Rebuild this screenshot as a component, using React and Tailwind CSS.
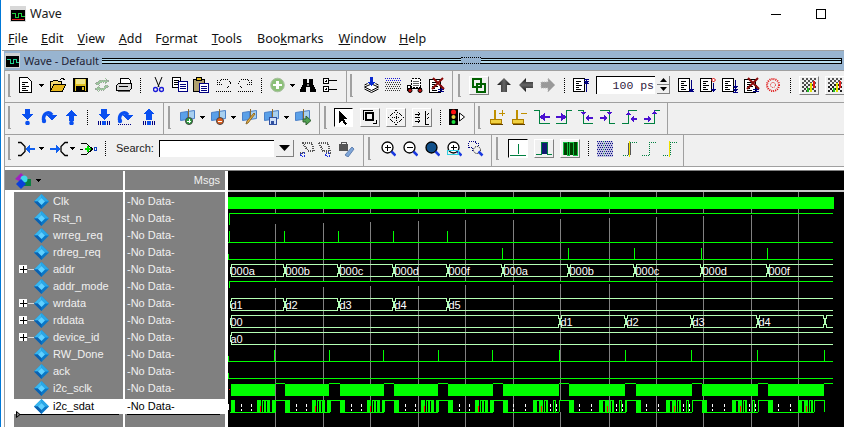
import React from "react";

const Ic = ({ w = 16, h = 16, c = "", children }) => (
  <svg width={w} height={h} viewBox={`0 0 ${w} ${h}`} className={`shrink-0 block ${c}`} fill="none" shapeRendering="crispEdges">
    {children}
  </svg>
);

const Grip = ({ c = "" }) => <div className={`shrink-0 w-[3px] h-[23px] border-l-2 border-b border-[#a0a0a0] ${c}`} />;
const Sep = ({ c = "" }) => <div className={`shrink-0 w-px h-[15px] border-l border-dotted border-black ${c}`} />;
const Arrow = ({ c = "" }) => (
  <Ic w={5} h={3} c={c}><path d="M0 0h5v1h-1v1h-1v1h-1v-1h-1v-1h-1z" fill="#000" /></Ic>
);
const Group = ({ c = "", children }) => (
  <div className={`flex items-center h-full shrink-0 border-r border-[#a0a0a0] ${c}`}>{children}</div>
);
const Btn = ({ c = "", children, pressed }) => (
  <div className={`shrink-0 h-[19px] flex items-center justify-center ${pressed ? "border-t border-l border-black border-r border-b border-r-white border-b-white bg-white" : "border-r border-b border-[#808080] border-t border-l border-t-white border-l-white"} ${c}`}>
    {children}
  </div>
);

const DocLines = ({ x = 0, y = 1 }) => (
  <g>
    <rect x={x + 0.5} y={y + 0.5} width="11" height="13" fill="#fff" stroke="#000" />
    <path d={`M${x + 3} ${y + 3.5}h5M${x + 3} ${y + 5.5}h3M${x + 3} ${y + 7.5}h6M${x + 3} ${y + 9.5}h3M${x + 3} ${y + 11.5}h5`} stroke="#000" />
  </g>
);
const NewDoc = ({ c }) => (
  <Ic w={13} c={c}>
    <path d="M.5.5h8l4 4v11h-12z" fill="#fff" stroke="#000" />
    <path d="M3 5.500h6M3 7.500h3M3 9.500h7M3 11.500h4M3 13.500h6" stroke="#000" />
  </Ic>
);
const Folder = ({ c }) => (
  <Ic c={c}>
    <path d="M10 3l2-2 3 2" stroke="#000" />
    <path d="M.5 14.500v-10h2l1-1h4l1 1h3v3" fill="#f3d870" stroke="#000" />
    <path d="M.5 14.500l3-7h12l-3 7z" fill="#e7b71c" stroke="#000" />
  </Ic>
);
const Save = ({ c }) => (
  <Ic w={15} c={c}>
    <rect x=".5" y="1.500" width="14" height="13" fill="#e0c020" stroke="#000" />
    <rect x="3" y="2" width="9" height="5" fill="#efe58a" />
    <rect x="3" y="9" width="9" height="5" fill="#000" />
    <rect x="9" y="10" width="2" height="3" fill="#e0c020" />
    <path d="M1 2h1v12h-1zM13 2h1v12h-1z" fill="#000" />
  </Ic>
);
const Reload = ({ c }) => (
  <Ic c={c}>
    <path d="M1 7l5-4h6l-1-2 4 3-4 3v-2h-4l-3 3z" fill="#9cc79c" stroke="#9aa69a" strokeDasharray="1 1" />
    <path d="M15 9l-5 4h-6l1 2-4-3 4-3v2h4l3-3z" fill="#9cc79c" stroke="#9aa69a" strokeDasharray="1 1" />
  </Ic>
);
const Print = ({ c }) => (
  <Ic c={c}>
    <path d="M4.500 6.500v-5h8l2 2v3" fill="#fff" stroke="#000" />
    <path d="M.5 8.500l2-2h13v5l-2 2h-13z" fill="#d8d8d8" stroke="#000" />
    <path d="M3 9.500h9" stroke="#000" />
    <path d="M2 14.500h12" stroke="#666" />
  </Ic>
);
const Cut = ({ c }) => (
  <Ic w={11} c={c}>
    <path d="M2 0l4 10M9 0l-4 10" stroke="#000" shapeRendering="auto" />
    <circle cx="2.500" cy="12.500" r="2" stroke="#1a1ad8" strokeWidth="1.400" shapeRendering="auto" />
    <circle cx="8.500" cy="12.500" r="2" stroke="#1a1ad8" strokeWidth="1.400" shapeRendering="auto" />
  </Ic>
);
const Copy = ({ c }) => (
  <Ic c={c}>
    <rect x=".5" y=".5" width="8" height="10" fill="#fff" stroke="#000" />
    <path d="M2 3.500h5M2 5.500h5M2 7.500h4" stroke="#000" />
    <rect x="6.500" y="4.500" width="9" height="10" fill="#fff" stroke="#000080" />
    <path d="M8 7.500h6M8 9.500h6M8 11.500h6" stroke="#000080" />
  </Ic>
);
const Paste = ({ c }) => (
  <Ic c={c}>
    <rect x=".5" y="2.500" width="11" height="12" fill="#b0a070" stroke="#000" />
    <rect x="3.500" y=".5" width="5" height="3" fill="#e8c020" stroke="#000" />
    <rect x="6.500" y="6.500" width="9" height="9" fill="#fff" stroke="#000080" />
    <path d="M8 9.500h6M8 11.500h6M8 13.500h6" stroke="#000080" />
  </Ic>
);
const Undo = ({ c, flip }) => (
  <Ic c={c}>
    <g transform={flip ? "translate(16 0) scale(-1 1)" : ""}>
      <path d="M3 6C5 1 11 1 14 5c1 3-1 5-3 6" stroke="#000" strokeDasharray="1 1" />
      <path d="M1 3l1 5 5-1" stroke="#000" strokeDasharray="1 1" />
      <path d="M0 14.500h15" stroke="#000" strokeDasharray="1 1" />
    </g>
  </Ic>
);
const Add = ({ c }) => (
  <Ic w={15} c={c}>
    <circle cx="7.500" cy="8" r="6.800" fill="#8cc078" stroke="#a8c0a0" shapeRendering="auto" />
    <path d="M6 4h3v3h3v2h-3v3h-3v-3h-3v-2h3z" fill="#fff" />
  </Ic>
);
const Bino = ({ c }) => (
  <Ic c={c}>
    <path d="M3 2h4v4h2v-4h4v5l3 6v2h-6v-5h-4v5h-6v-2l3-6z" fill="#000" />
    <path d="M7 7h2v2h-2z" fill="#888" />
  </Ic>
);
const Tree = ({ c }) => (
  <Ic w={15} c={c}>
    <rect x=".5" y="1.500" width="5" height="5" fill="#fff" stroke="#000" />
    <rect x=".5" y="9.500" width="5" height="5" fill="#fff" stroke="#000" />
    <path d="M2 4h2M3 3v2M2 12h2M3 11v2M6 3.500h8M6 12.500h8" stroke="#000" />
  </Ic>
);
const Layers = ({ c }) => (
  <Ic w={15} c={c}>
    <path d="M7.500 7l7 3-7 3.500-7-3.500z" fill="#fff" stroke="#000" shapeRendering="auto" />
    <path d="M.5 12l7 3.500 7-3.500" stroke="#000" shapeRendering="auto" />
    <path d="M.5 8l3-1.500M14.500 8l-3-1.500" stroke="#000" shapeRendering="auto" />
    <path d="M6 0h3v5h2l-3.500 4-3.500-4h2z" fill="#0a2ad0" />
  </Ic>
);
const Dots = ({ c }) => (
  <Ic c={c}>
    {[...Array(7)].map((_, r) =>
      [...Array(8)].map((_, k) => (
        <rect key={`${r}-${k}`} x={k * 2 + (r % 2)} y={1 + r * 2} width="1" height="1" fill={r < 2 ? "#1a1ad0" : "#333"} />
      ))
    )}
  </Ic>
);
const Cart = ({ c }) => (
  <Ic c={c}>
    <path d="M4.500 1.500h9v9h-9z" fill="#fff" stroke="#000" strokeDasharray="2 1" />
    <path d="M6 4h6M6 6h6M6 8h6" stroke="#666" />
    <path d="M.5 8.500h3v5h-3z" fill="#fff" stroke="#000" />
    <path d="M1 11h14" stroke="#000" />
    <circle cx="3" cy="13.500" r="2" fill="#c01010" stroke="#000" shapeRendering="auto" />
    <circle cx="13" cy="13.500" r="2" fill="#c01010" stroke="#000" shapeRendering="auto" />
  </Ic>
);
const XDoc = ({ c }) => (
  <Ic c={c}>
    <DocLines x={0} y={2} />
    <path d="M12 8v6M9 12.500h6M9 14.500h6" stroke="#000080" />
    <path d="M4 1l11 11M14 1l-11 11" stroke="#8a0a0a" strokeWidth="2" shapeRendering="auto" />
  </Ic>
);
const ArrowBlack = ({ dir, c, light }) => {
  const rot = { up: 0, left: -90, right: 90 }[dir];
  return (
    <Ic c={c}>
      <defs>
        <linearGradient id={`g${dir}`} x1="0" x2="1" y1="0" y2="0">
          <stop offset="0" stopColor="#111" />
          <stop offset=".5" stopColor="#666" />
          <stop offset="1" stopColor="#111" />
        </linearGradient>
      </defs>
      <g transform={`rotate(${rot} 8 8)`}>
        <path d="M8 1l7 7h-4v7h-6v-7h-4z" fill={light ? "#999" : `url(#g${dir})`} strokeDasharray="1 1" stroke={light ? "#bbb" : "none"} shapeRendering="auto" />
      </g>
    </Ic>
  );
};
const DocMark = ({ c, kind }) => (
  <Ic c={c}>
    <DocLines x={0} y={1} />
    {kind === "up" && <path d="M13.500 3v12M11 2h5M11 4.500h5M11.500 7l2-2 2 2" stroke="#000080" />}
    {kind === "down" && <path d="M13.500 3v11M11 14.500h5M11.500 12l2 2 2-2" stroke="#000080" />}
    {kind === "updown" && <><path d="M13.500 6v9M11.500 12l2 2 2-2" stroke="#000080" /><path d="M13.500 1l2 2-2 2-2-2z" fill="#fff" stroke="#e00000" shapeRendering="auto" /></>}
    {kind === "dd" && <path d="M13.500 3v11M11.500 9l2 2 2-2M11.500 12l2 2 2-2M11 15h5" stroke="#000080" />}
  </Ic>
);
const RedBall = ({ c }) => (
  <Ic w={14} c={c}>
    <circle cx="7" cy="8" r="6" stroke="#e01010" strokeDasharray="1 1" strokeWidth="2" shapeRendering="auto" />
    <circle cx="7" cy="8" r="2.500" stroke="#e01010" strokeDasharray="1 1" shapeRendering="auto" />
  </Ic>
);
const Link = () => (
  <Ic w={14} h={15}>
    <rect x="1" y="1" width="8" height="8" stroke="#006000" strokeWidth="2" />
    <rect x="5" y="6" width="8" height="8" stroke="#006000" strokeWidth="2" />
  </Ic>
);
const Check = ({ b = "#444" }) => (
  <Ic w={15} h={15}>
    {[...Array(7)].map((_, r) =>
      [...Array(7)].map((_, k) =>
        (r + k) % 2 === 0 ? <rect key={`${r}${k}`} x={k * 2} y={r * 2} width="1.500" height="1.500" fill={r < 3 ? "#555" : b} /> : null
      )
    )}
    <path d="M9 5v9" stroke="#e0e000" strokeWidth="2" />
    <path d="M12 3v7" stroke="#e02020" strokeWidth="2" />
    <path d="M6 10v4" stroke="#20c020" strokeWidth="2" />
  </Ic>
);

const Ball = ({ c, up }) => (
  <Ic w={11} c={c}>
    <g transform={up ? "translate(0 12) scale(1 -1)" : ""}>
      <path d="M3 0h5v5h3l-5.500 6-5.500-6h3z" fill="#0a50f0" />
    </g>
    <circle cx="5.500" cy="14" r="2.300" fill="#0a50f0" shapeRendering="auto" />
  </Ic>
);
const Curve = ({ c, w = 16, base }) => (
  <Ic w={w} c={c}>
    <path d="M2.500 11C2 4 8 2 11 6" stroke="#0a50f0" strokeWidth="3.500" shapeRendering="auto" />
    <path d="M6 6h10l-5 6z" fill="#0a50f0" />
    <circle cx="3" cy="12" r="2.200" fill="#0a50f0" shapeRendering="auto" />
    {base && <path d="M1 15.500h14" stroke="#000080" strokeDasharray="1 1" />}
  </Ic>
);
const BaseArrow = ({ c, up }) => (
  <Ic w={12} c={c}>
    <path d={up ? "M6 0l6 5h-3v6h-6v-6h-3z" : "M3 0h6v5h3l-6 6-6-6h3z"} fill="#0a50f0" />
    <path d="M.5 12v4M2.500 12v4M9.500 12v4M11.500 12v4" stroke="#000080" />
    <rect x="4" y="12" width="4" height="4" fill="#0a50f0" />
  </Ic>
);
const WinFile = ({ c, badge, dd }) => (
  <Ic w={dd || 16} c={c}>
    <path d="M.5 3.500l7-1 0 8-7 1z" fill="#5aa0e8" stroke="#4a80c8" shapeRendering="auto" />
    <path d="M7.500 2.500l7-1 0 8-7 1z" fill="#a8d0f0" stroke="#4a80c8" shapeRendering="auto" />
    <path d="M8 0v10" stroke="#8a6a30" />
    {badge}
  </Ic>
);
const Pointer = () => (
  <Ic w={11} h={15}>
    <path d="M1 1l9 8-4 0 3 5-2 1-3-5-3 3z" fill="#000" />
  </Ic>
);
const Boxes = () => (
  <Ic w={14} h={14}>
    <path d="M.5 9.500v-9h9" stroke="#000" />
    <rect x="3" y="3" width="7" height="7" stroke="#000" strokeWidth="2" />
    <path d="M10 13.500h3.500v-3.500" stroke="#000" />
  </Ic>
);
const Compass = () => (
  <Ic w={16} h={15}>
    <path d="M8 .5l4 4M8 .5l-4 4M8 14.500l4-4M8 14.500l-4-4M.5 7.500l4-4M.5 7.500l4 4M15.500 7.500l-4-4M15.500 7.500l-4 4" stroke="#000" strokeDasharray="1 1" />
    <path d="M4 7.500h8M8 3.500v8" stroke="#000" strokeDasharray="1 1" />
  </Ic>
);
const Stairs = () => (
  <Ic w={16} h={15}>
    <path d="M1 4h5M1 7.500h5M1 11h5M11 1v13h4" stroke="#000" />
    <path d="M4 2l2 2-2 2M4 9l2 2-2 2" stroke="#000" />
    <path d="M13 4h2M14 3v2M13 8h2M14 7v2" stroke="#000" strokeDasharray="1 1" />
  </Ic>
);
const Light = ({ c }) => (
  <Ic c={c}>
    <rect x="0" y="0" width="9" height="16" fill="#000" />
    <circle cx="4.500" cy="3" r="2.500" fill="#ff1010" shapeRendering="auto" />
    <circle cx="4.500" cy="8" r="2" fill="#e8d040" shapeRendering="auto" />
    <circle cx="4.500" cy="13" r="2" fill="#20e040" shapeRendering="auto" />
    <path d="M10.500 4v8l5-4z" fill="#fff" stroke="#000" shapeRendering="auto" />
  </Ic>
);
const Mark = ({ c, plus }) => (
  <Ic w={15} c={c}>
    <path d="M5 1v9" stroke="#c09000" strokeWidth="2" />
    <rect x=".5" y="10.500" width="11" height="4" fill="#f0d040" stroke="#b08000" />
    <path d="M1 15.500h12" stroke="#604000" />
    {plus ? <path d="M9 4h6M12 1v6" stroke="#c09000" /> : <path d="M9 4h6" stroke="#c09000" />}
  </Ic>
);
const Edge = ({ c, d, a, w = 16 }) => (
  <Ic w={w} c={c}>
    <path d={d} stroke="#008040" />
    <path d={a} fill="#4a10d0" />
  </Ic>
);
const Glass = ({ c, kind }) => (
  <Ic w={kind === "dash" ? 16 : 15} c={c}>
    {kind === "dash" ? (
      <path d="M.5 6.500v-6h7M.5 6.500h4v4M7.500 .5v2h3v3" stroke="#000080" strokeDasharray="1 1" />
    ) : (
      <circle cx="6.500" cy="6.500" r="5.500" fill={kind === "full" ? "#10508a" : "#fff"} stroke="#000" strokeWidth="1.300" shapeRendering="auto" />
    )}
    {kind === "dash" && <circle cx="9" cy="9" r="3.500" stroke="#000" strokeDasharray="1 1" shapeRendering="auto" />}
    {(kind === "plus" || kind === "area") && <path d="M3.500 6.500h6M6.500 3.500v6" stroke="#000" strokeWidth="1.400" />}
    {kind === "minus" && <path d="M3.500 6.500h6" stroke="#000" strokeWidth="1.400" />}
    <path d="M10.500 10.500l4 4" stroke="#1a3ae0" strokeWidth="2.500" shapeRendering="auto" />
    {kind === "area" && <rect x=".5" y="9.500" width="11" height="4" stroke="#30d0e0" />}
  </Ic>
);
const PlotA = () => (
  <Ic w={16} h={14}><path d="M8 2v10M0 13h16" stroke="#008040" /></Ic>
);
const PlotB = () => (
  <Ic w={16} h={15}><rect x="5" y="1" width="6" height="12" fill="#101870" /><path d="M0 13h5v-12h6v12h5" stroke="#008040" /></Ic>
);
const PlotC = () => (
  <Ic w={16} h={15}><rect x="1" y="1" width="14" height="13" fill="#004000" /><path d="M1 14v-13h4v13h2v-13h4v13h4v-13" stroke="#10c040" /></Ic>
);
const Dither = ({ c }) => (
  <Ic c={c}>
    {[...Array(8)].map((_, r) =>
      [...Array(8)].map((_, k) => (
        <rect key={`${r}${k}`} x={k * 2 + (r % 2 ? 1 : 0)} y={r * 2} width="1" height="1" fill={k === 3 ? "#20a040" : "#101080"} />
      ))
    )}
    <rect x="0" y="0" width="16" height="16" fill="#0000a0" opacity=".18" />
  </Ic>
);
const Step = ({ c, yellow, w = 15, fill }) => (
  <Ic w={w} c={c}>
    <path d="M0 14.500h7v-13h8" stroke="#008040" strokeDasharray="1 1" />
    {fill && <rect x="5" y="2" width="3" height="12" fill="#555" />}
    {yellow && <path d="M6.500 0v16" stroke="#f0e000" />}
  </Ic>
);

const Diamond = () => (
  <svg width="15" height="15" viewBox="0 0 15 15" className="shrink-0 block">
    <path d="M7.500 0L15 7.500 7.500 15 0 7.500z" fill="#0a78c8" />
    <path d="M7.500 0L15 7.500 11 7.500 7.500 4z" fill="#2aa8e8" />
    <path d="M7.500 0L0 7.500 4 7.500 7.500 4z" fill="#38b8f0" />
    <path d="M7.500 15L0 7.500 4 7.500 7.500 11z" fill="#0a60b0" />
    <path d="M7.500 4L11 7.500 7.500 11 4 7.500z" fill="#60d0ff" />
  </svg>
);

const signals = [
  ["Clk"], ["Rst_n"], ["wrreg_req"], ["rdreg_req"], ["addr", 1], ["addr_mode"],
  ["wrdata", 1], ["rddata", 1], ["device_id", 1], ["RW_Done"], ["ack"], ["i2c_sclk"],
];

const Name = ({ name, exp }) => (
  <div className="h-[17px] flex items-center">
    {exp ? (
      <>
        <div className="ml-[5px] w-[9px] h-[9px] bg-white border-r border-b border-[#808080] flex items-center justify-center shrink-0">
          <svg width="7" height="7" viewBox="0 0 7 7" shapeRendering="crispEdges" className="block"><path d="M0 3.500h7M3.500 0v7" stroke="#000" /></svg>
        </div>
        <div className="w-[6px] h-px bg-[#d8d8d8] shrink-0" />
      </>
    ) : (
      <div className="w-[20px] shrink-0" />
    )}
    <Diamond />
    <span className="ml-1 text-[11px] text-[#f0f0f0] leading-none">{name}</span>
  </div>
);

const T = [229, 284, 338, 393, 447, 502, 568, 634, 701, 767];
const grid = [275, 323, 370, 418, 465, 513, 560, 609, 656, 703, 751, 798];
const G = "#00ff00";
const BUS = "#b4ffb4";

const Bus = ({ y, times, labels, end = 833 }) => {
  const t = y + 0.5, b = y + 12.5, m = y + 6.5;
  let d = "";
  times.forEach((x, i) => {
    const nx = times[i + 1] ?? end;
    const last = i === times.length - 1;
    if (i === 0) d += `M${x + 1} ${m}L${x + 3} ${t}M${x + 1} ${m}L${x + 3} ${b}`;
    d += `M${x + 3} ${t}H${last ? nx : nx - 1}M${x + 3} ${b}H${last ? nx : nx - 1}`;
    if (!last) d += `M${nx - 1} ${t}L${nx + 1} ${m}L${nx - 1} ${b}M${nx + 3} ${t}L${nx + 1} ${m}L${nx + 3} ${b}`;
  });
  return (
    <g>
      <path d={d} stroke={BUS} fill="none" />
      {labels.map((l, i) => (
        <text key={i} x={times[i] + 1.5} y={y + 10.5} fill="#fff" fontSize="11" fontFamily="'Liberation Sans', sans-serif">{l}</text>
      ))}
    </g>
  );
};

const shortP = { solid: [[1, 5], [27, 31], [38, 40], [42, 45]], hi: [[32, 34], [35, 37]], white: [11, 21], red: [30] };
const longP = { solid: [[0, 5], [30, 33], [37, 40], [43, 45]], hi: [[33, 36], [41, 43], [50, 52], [56, 59]], white: [10, 22, 47, 53, 60, 62], red: [38, 61] };

const Sdat = () => {
  const starts = [[230, 55, shortP], [285, 55, shortP], [340, 54, shortP], [394, 54, shortP], [448, 55, shortP], [503, 66, longP], [569, 67, longP], [636, 66, longP], [702, 66, longP], [768, 56, longP]];
  return (
    <g>
      {starts.map(([s, len, p], i) => {
        const stop = len - 10;
        return (
          <g key={i}>
            <path d={`M${s} 412.500H${s + stop}`} stroke={G} />
            {p.solid.map(([a, b], k) => <rect key={k} x={s + a} y="400" width={b - a} height="12" fill={G} />)}
            {p.hi.filter(([a]) => a < stop).map(([a, b], k) => <path key={k} d={`M${s + a + 0.5} 412V400.500H${s + b + 0.5}V412`} stroke={G} />)}
            {p.white.filter((x) => x < stop).map((x, k) => <path key={k} d={`M${s + x + 0.5} 404v3M${s + x + 0.5} 409v2`} stroke="#fff" />)}
            {p.red.filter((x) => x < stop).map((x, k) => <path key={k} d={`M${s + x + 0.5} 406v6`} stroke="#ff0000" />)}
            <path d={`M${s + stop + 0.5} 412V400.500H${s + len + 0.5}V412`} stroke={G} />
          </g>
        );
      })}
      <path d="M228.500 404v6" stroke="#fff" />
    </g>
  );
};

const Wave = () => {
  const sclk = [[231, 275], [285, 329], [340, 384], [394, 438], [448, 493], [503, 559], [569, 625], [636, 692], [702, 758], [768, 824]];
  return (
    <svg width="616" height="235" viewBox="228 192 616 235" shapeRendering="crispEdges" className="block shrink-0">
      {grid.map((x) => <path key={x} d={`M${x + 0.5} 192V427`} stroke="#808080" />)}
      <rect x="228" y="197" width="606" height="12" fill={G} />
      <path d="M229.500 225V213.500H833" stroke={G} />
      <path d="M228 242.500H833" stroke={G} />
      {[229, 284, 338, 393, 447].map((x) => <path key={x} d={`M${x + 0.5} 242V231`} stroke={G} />)}
      <path d="M228 259.500H833M228.500 254V259" stroke={G} />
      {[502, 568, 634, 701, 767].map((x) => <path key={x} d={`M${x + 0.5} 259V248`} stroke={G} />)}
      <Bus y={264} times={T} labels={["000a", "000b", "000c", "000d", "000f", "000a", "000b", "000c", "000d", "000f"]} />
      <path d="M229.500 288V281.500H833" stroke={G} />
      <Bus y={298} times={[229, 284, 338, 393, 447]} labels={["d1", "d2", "d3", "d4", "d5"]} />
      <Bus y={315} times={[229, 559, 625, 691, 757, 824]} labels={["00", "d1", "d2", "d3", "d4", ""]} />
      <Bus y={332} times={[229]} labels={["a0"]} />
      <path d="M228 361.500H833M228.500 356V361" stroke={G} />
      {[274, 329, 383, 438, 492, 559, 625, 691, 757, 824].map((x) => <path key={x} d={`M${x + 0.5} 361V350`} stroke={G} />)}
      <path d="M228 378.500H833M228.500 373V378" stroke={G} />
      {sclk.map(([a, b], i) => {
        const nx = sclk[i + 1] ? sclk[i + 1][0] : 833;
        return (
          <g key={a}>
            <rect x={a} y="384" width={b - a} height="12" fill={G} />
            <path d={`M${b + 0.5} 384V383.500H${nx}`} stroke={G} />
          </g>
        );
      })}
      <path d="M229 389.500h1" stroke="#ff0000" />
      <Sdat />
    </svg>
  );
};

const Row = ({ c = "", children }) => <div className={`flex shrink-0 border-t border-[#a0a0a0] ${c}`}>{children}</div>;

export default function App() {
  return (
    <div className="w-[844px] h-[427px] overflow-hidden bg-white flex flex-col border-l border-[#0078d7] font-['Noto_Sans',sans-serif]">
      {/* title */}
      <div className="h-[28px] flex items-center shrink-0">
        <svg width="16" height="16" viewBox="0 0 16 16" shapeRendering="crispEdges" className="ml-[9px] block shrink-0">
          <rect width="16" height="16" fill="#d8d8d8" />
          <rect x="1" y="4" width="14" height="11" fill="#000" />
          <path d="M2 7h3v4h3v-4h3v3h4" stroke="#20d040" fill="none" />
          <path d="M2 13h12" stroke="#e02020" />
        </svg>
        <span className="ml-[4px] text-[12.5px] text-[#1a1a1a] leading-none">Wave</span>
        <div className="ml-auto mr-[35px] w-[10px] h-px bg-black" />
        <div className="mr-[18px] w-[10px] h-[10px] border border-black" />
      </div>
      {/* menu */}
      <div className="h-[22px] flex items-center shrink-0 text-[12.5px] text-[#111] leading-none pl-[7px]">
        <span><u>F</u>ile</span>
        <span className="ml-[13px]"><u>E</u>dit</span>
        <span className="ml-[14px]"><u>V</u>iew</span>
        <span className="ml-[14px]"><u>A</u>dd</span>
        <span className="ml-[13px]">F<u>o</u>rmat</span>
        <span className="ml-[14px]"><u>T</u>ools</span>
        <span className="ml-[15px]">Boo<u>k</u>marks</span>
        <span className="ml-[15px]"><u>W</u>indow</span>
        <span className="ml-[13px]"><u>H</u>elp</span>
      </div>
      {/* inner window */}
      <div className="ml-[1px] flex-1 min-h-0 flex flex-col border-t border-[#a0a0a0]">
        <div className="ml-[2px] h-[19px] bg-[#98b4d0] flex items-center shrink-0">
          <svg width="15" height="15" viewBox="0 0 15 15" shapeRendering="crispEdges" className="ml-[1px] block shrink-0">
            <rect width="15" height="15" fill="#d0d0d0" />
            <rect x="1" y="3" width="13" height="11" fill="#000" />
            <path d="M2 6h3v4h3v-4h3v3h3" stroke="#20d090" fill="none" />
          </svg>
          <span className="ml-[4px] text-[11px] text-[#223] leading-none w-[78px] shrink-0 whitespace-nowrap">Wave - Default</span>
          <div className="w-[359px] h-[6px] border-t border-b border-black bg-[#b8def0] flex flex-col justify-center shrink-0">
            <div className="h-px bg-black" />
          </div>
          <div className="w-[20px] h-[7px] bg-[#98b4d0] border-y border-dotted border-black shrink-0" />
          <div className="flex-1 h-[6px] mr-[2px] border-t border-b border-r border-black bg-[#b8def0] flex flex-col justify-center">
            <div className="h-px bg-black" />
          </div>
        </div>
        <div className="ml-[2px] flex-1 min-h-0 flex flex-col bg-[#f0f0f0] border-l border-[#a0a0a0]">
          {/* Row 1 */}
          <Row c="h-[32px] border-[#606060] [&>div]:pb-[3px]">
            <Group c="w-[342px] pl-[3px]">
              <Grip />
              <NewDoc c="ml-2" />
              <Arrow c="ml-[7px]" />
              <Folder c="ml-1.5" />
              <Save c="ml-[7px]" />
              <Reload c="ml-1.5" />
              <Print c="ml-1.5" />
              <Sep c="ml-2" />
              <Cut c="ml-3" />
              <Copy c="ml-2" />
              <Paste c="ml-[5px]" />
              <Undo c="ml-[7px]" />
              <Undo c="ml-[5px]" flip />
              <Sep c="ml-2" />
              <Add c="ml-2" />
              <Arrow c="ml-[5px]" />
              <Bino c="ml-[5px]" />
              <Tree c="ml-[7px]" />
            </Group>
            <Group c="w-[106px] pl-[3px]">
              <Grip />
              <Layers c="ml-[11px]" />
              <Dots c="ml-1.5" />
              <Cart c="ml-1.5" />
              <XDoc c="ml-1.5" />
            </Group>
            <div className="flex items-center h-full pl-[5px]">
              <Grip />
              <Btn c="ml-2 w-[20px]"><Link /></Btn>
              <ArrowBlack dir="up" c="ml-[7px]" />
              <ArrowBlack dir="left" c="ml-1.5" />
              <ArrowBlack dir="right" c="ml-1.5" light />
              <Sep c="ml-2" />
              <DocMark kind="up" c="ml-2" />
              <div className="ml-[7px] w-[59px] h-[18px] bg-white border-t border-l border-black shrink-0 flex items-center justify-end pr-[1px] text-[11.5px] text-[#302040] font-['Liberation_Mono',monospace] leading-none whitespace-pre">100 ps</div>
              <div className="ml-[2px] w-[13px] h-[18px] flex flex-col shrink-0 border-r border-b border-[#808080]">
                <div className="flex-1 flex items-center justify-center"><svg width="7" height="4" viewBox="0 0 7 4" className="block"><path d="M3.500 0L7 4H0z" fill="#000" /></svg></div>
                <div className="h-px bg-[#808080]" />
                <div className="flex-1 flex items-center justify-center"><svg width="7" height="4" viewBox="0 0 7 4" className="block"><path d="M0 0h7L3.500 4z" fill="#000" /></svg></div>
              </div>
              <DocMark kind="down" c="ml-2" />
              <DocMark kind="updown" c="ml-1.5" />
              <DocMark kind="dd" c="ml-1.5" />
              <XDoc c="ml-1.5" />
              <RedBall c="ml-1.5" />
              <Sep c="ml-2.5" />
              <Btn c="ml-2 w-[20px]"><Check /></Btn>
              <Btn c="ml-1.5 w-[20px]"><Check b="#222" /></Btn>
            </div>
          </Row>
          {/* Row 2 */}
          <Row c="h-[32px] [&>div]:pb-[3px]">
            <Group c="w-[159px] pl-[3px]">
              <Grip />
              <Ball c="ml-[11px]" />
              <Curve c="ml-2" />
              <Ball up c="ml-[9px]" />
              <Sep c="ml-2.5" />
              <BaseArrow c="ml-2.5" />
              <Curve w={17} base c="ml-[7px]" />
              <BaseArrow up c="ml-[9px]" />
            </Group>
            <Group c="w-[156px] pl-[4px]">
              <Grip />
              <WinFile c="ml-[9px]" dd={15} badge={<><circle cx="9" cy="12" r="3.500" fill="#30a040" stroke="#444" shapeRendering="auto" /><path d="M7 12h4M9 10v4" stroke="#fff" /></>} />
              <Arrow c="ml-[5px]" />
              <WinFile c="ml-1.5" dd={15} badge={<><circle cx="9" cy="12" r="3.500" fill="#e06020" stroke="#444" shapeRendering="auto" /><path d="M7 12h4" stroke="#fff" /></>} />
              <Arrow c="ml-[5px]" />
              <WinFile c="ml-1.5" badge={<path d="M13 5L6 14l-2 1 1-3 7-8z" fill="#e8b040" stroke="#8a6a30" shapeRendering="auto" />} />
              <WinFile c="ml-1.5" dd={15} badge={<><rect x="5" y="8" width="7" height="7" fill="#d0e0f8" stroke="#3050a0" /><rect x="7" y="12" width="3" height="3" fill="#3050a0" /></>} />
              <Arrow c="ml-[5px]" />
              <WinFile c="ml-1.5" badge={<path d="M8 10h3V7l5 4.500-5 4.500v-3H8z" fill="#50a050" stroke="#306030" shapeRendering="auto" />} />
            </Group>
            <Group c="w-[155px] pl-[4px]">
              <Grip />
              <Btn pressed c="ml-[7px] w-[19px]"><Pointer /></Btn>
              <Btn c="ml-[7px] w-[20px]"><Boxes /></Btn>
              <Btn c="ml-1.5 w-[20px]"><Compass /></Btn>
              <Btn c="ml-1.5 w-[20px]"><Stairs /></Btn>
              <Sep c="ml-2" />
              <Light c="ml-2" />
            </Group>
            <Group c="w-[193px] pl-[3px]">
              <Grip />
              <Mark plus c="ml-[9px]" />
              <Mark c="ml-[7px]" />
              <Edge c="ml-[7px]" d="M0 1.500h5.500v13h10" a="M5 8l6-4v3h5v2h-5v3z" />
              <Edge c="ml-1.5" d="M0 14.500h10.500v-13h5" a="M11 8l-6-4v3h-5v2h5v3z" />
              <Edge w={15} c="ml-1.5" d="M0 1.500h5.500v13h9" a="M3 3h5l-2.500 3zM7 9l4-3v2h4v2h-4v2z" />
              <Edge w={15} c="ml-[7px]" d="M0 1.500h9.500v13h5" a="M7 3h5l-2.500 3zM8 9l-4-3v2h-4v2h4v2z" />
              <Edge w={15} c="ml-[7px]" d="M0 14.500h6.500v-13h8" a="M4 6h5L6.500 2zM8 10l4-3v2h3v2h-3v2z" />
              <Edge w={16} c="ml-[7px]" d="M0 14.500h10.500v-13h5" a="M8 5h5l-2.500-4zM8 10l-4-3v2h-4v2h4v2z" />
            </Group>
          </Row>
          {/* Row 3 */}
          <Row c="h-[32px] [&>div]:pb-[4px]">
            <Group c="w-[359px] pl-[3px]">
              <Grip />
              <Ic w={17} c="ml-[7px]">
                <path d="M0 1.500h3l4 4v5l-4 4h-3" stroke="#000" shapeRendering="auto" strokeWidth="1.300" />
                <path d="M7 8l5-4v3h5v2h-5v3z" fill="#1060f0" />
              </Ic>
              <Arrow c="ml-1" />
              <Ic w={18} c="ml-1.5">
                <path d="M18 1.500h-3l-4 4v5l4 4h3" stroke="#000" shapeRendering="auto" strokeWidth="1.300" />
                <path d="M11 8l-5-4v3h-6v2h6v3z" fill="#1060f0" />
              </Ic>
              <Arrow c="ml-[2px]" />
              <Ic w={17} c="ml-[5px]">
                <path d="M.5 2.500h6l6 5.500-6 5.500h-6M0 8h3" stroke="#000" />
                <path d="M5 7h2V5h2v2h2v2H9v2H7V9H5z" fill="#00e000" />
                <rect x="14.500" y="6.500" width="2" height="3" fill="#fff" stroke="#1040c0" />
              </Ic>
              <Sep c="ml-2" />
              <span className="ml-2.5 w-[37px] text-[11px] text-[#222] font-['Liberation_Sans',sans-serif] leading-none shrink-0">Search:</span>
              <div className="ml-1.5 w-[115px] h-[17px] bg-white border-t border-l border-black shrink-0" />
              <div className="ml-[2px] w-[18px] h-[17px] border-r border-b border-[#808080] flex items-center justify-center shrink-0">
                <svg width="11" height="6" viewBox="0 0 11 6" className="block"><path d="M0 0h11L5.500 6z" fill="#000" /></svg>
              </div>
              <Ic w={17} c="ml-[5px]"><path d="M4 2h9l2 8-6 0zM1 12h5" stroke="#555" strokeDasharray="1 1" strokeWidth="2" /><path d="M1 14l3-3 3 3-3 2z" stroke="#1a30e0" strokeDasharray="1 1" /></Ic>
              <Ic w={15} c="ml-px"><path d="M2 2h9l2 8H6zM9 12h5" stroke="#555" strokeDasharray="1 1" strokeWidth="2" /><path d="M8 14l3-3 3 3-3 2z" stroke="#1a30e0" strokeDasharray="1 1" /></Ic>
              <Ic w={17} c="ml-1.5">
                <path d="M1 3h9v7h-9z" fill="#555" />
                <path d="M3 3v-2h5v2" stroke="#555" />
                <path d="M7 14l7-8 2 2-6 8z" fill="#7fa6d8" stroke="#6080b0" shapeRendering="auto" />
              </Ic>
            </Group>
            <Group c="w-[128px] pl-[4px]">
              <Grip />
              <Glass kind="plus" c="ml-2.5" />
              <Glass kind="minus" c="ml-[7px]" />
              <Glass kind="full" c="ml-[7px]" />
              <Glass kind="area" c="ml-[7px]" />
              <Glass kind="dash" c="ml-1.5" />
            </Group>
            <Group c="w-[192px] pl-[4px]">
              <Grip />
              <Btn pressed c="ml-[9px] w-[20px]"><PlotA /></Btn>
              <Btn c="ml-1.5 w-[20px]"><PlotB /></Btn>
              <Btn c="ml-1.5 w-[20px]"><PlotC /></Btn>
              <Sep c="ml-2" />
              <Dither c="ml-2" />
              <Step fill yellow c="ml-2.5" />
              <Step c="ml-1" />
              <Step yellow w={16} c="ml-1.5" />
            </Group>
          </Row>
          <div className="h-[4px] shrink-0 border-t border-[#a0a0a0] bg-white" />
          {/* Panes */}
          <div className="flex-1 min-h-0 flex border-t border-[#808080] bg-white overflow-hidden font-['Liberation_Sans',sans-serif]">
            <div className="w-[118px] shrink-0 flex flex-col">
              <div className="h-[19px] bg-[#808080] flex items-center pl-[10px] shrink-0">
                <svg width="18" height="16" viewBox="0 0 18 16" className="block shrink-0">
                  <path d="M6 0l6 6-6 3-6-3z" fill="#a020c0" />
                  <rect x="9" y="6" width="7" height="7" fill="#0a8040" />
                  <circle cx="9" cy="6" r="3.500" fill="#40d8e8" />
                  <path d="M6 6l5 5-5 5-5-5z" fill="#0a40d8" />
                </svg>
                <Arrow c="ml-[3px]" />
              </div>
              <div className="h-[2px] bg-white shrink-0" />
              <div className="flex-1 flex min-h-0">
                <div className="w-[9px] bg-white shrink-0" />
                <div className="flex-1 bg-[#808080] pt-px min-w-0 flex flex-col">
                  {signals.map(([n, e]) => <Name key={n} name={n} exp={e} />)}
                  <div className="mt-[2px] h-[15px] bg-white flex items-center pl-[20px]">
                    <Diamond />
                    <span className="ml-1 text-[11px] text-black leading-none">i2c_sdat</span>
                  </div>
                  <div className="h-px bg-black ml-[2px] mr-[4px] relative">
                    <svg width="5" height="7" viewBox="0 0 5 7" className="absolute left-0 top-[-3px] block"><path d="M.5 .5L4 3.500.5 6.500z" fill="#808080" stroke="#000" /></svg>
                  </div>
                </div>
              </div>
            </div>
            <div className="w-[2px] bg-white shrink-0" />
            <div className="w-[100px] shrink-0 flex flex-col bg-[#808080]">
              <div className="h-[19px] flex items-center justify-end pr-[5px] text-[11px] text-[#f0f0f0] leading-none shrink-0">Msgs</div>
              <div className="h-[2px] bg-white shrink-0" />
              <div className="flex-1 pt-px flex flex-col">
                {signals.map(([n]) => (
                  <div key={n} className="h-[17px] flex items-center pl-[2px] text-[11px] text-[#f0f0f0] leading-none">-No Data-</div>
                ))}
                <div className="mt-[2px] h-[15px] bg-white flex items-center pl-[2px] text-[11px] text-black leading-none">-No Data-</div>
                <div className="h-px bg-black ml-[2px] mr-[5px]" />
              </div>
            </div>
            <div className="w-[3px] bg-white shrink-0" />
            <div className="flex-1 min-w-0 bg-black flex flex-col">
              <div className="h-[19px] shrink-0" />
              <div className="h-[2px] bg-[#c8c8c8] shrink-0" />
              <Wave />
            </div>
          </div>
        </div>
      </div>
    </div>
  );
}
